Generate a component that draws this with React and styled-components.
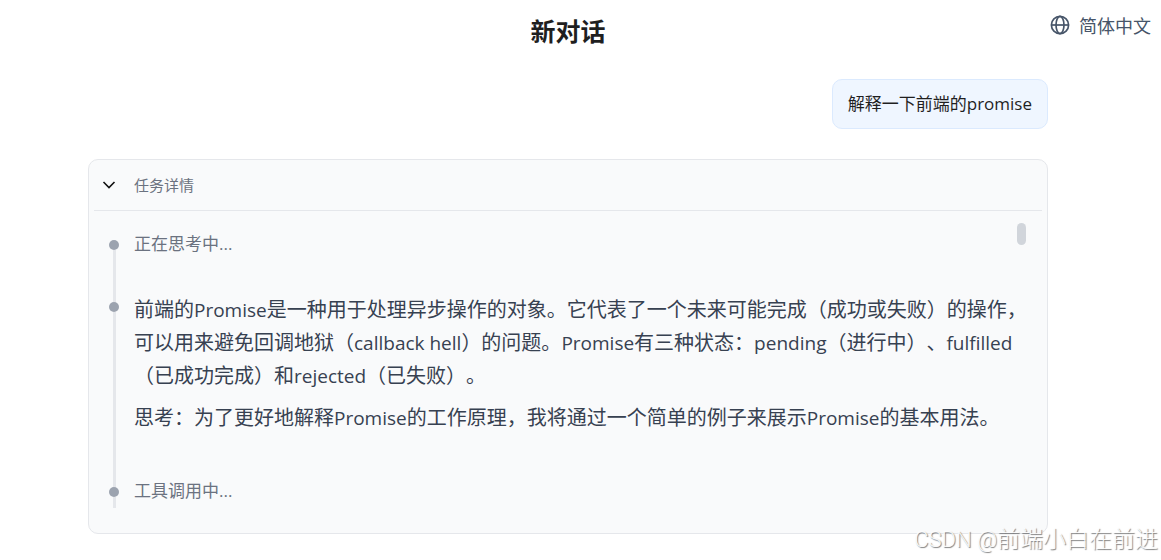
import React from "react";
import styled, { createGlobalStyle } from "styled-components";

const GlobalStyle = createGlobalStyle`
  *, *::before, *::after { box-sizing: border-box; }
  body {
    margin: 0;
    background: #fff;
    color: #1f1f1f;
    font-family: "Open Sans", "Noto Sans CJK SC", sans-serif;
    text-spacing-trim: space-all;
  }
  h1, h2, p, ol { margin: 0; padding: 0; }
  button { font: inherit; color: inherit; background: none; border: 0; padding: 0; cursor: pointer; }
`;

const Page = styled.div`
  position: relative;
  min-height: 100vh;
  overflow: hidden;
`;

const Header = styled.header`
  display: flex;
  align-items: flex-start;
  padding: 12px 10px 0 86px;
`;

const Title = styled.h1`
  flex: 1;
  text-align: center;
  font-size: 25px;
  line-height: 38px;
  font-weight: 700;
`;

const LanguageButton = styled.button`
  display: flex;
  align-items: flex-start;
  gap: 9px;
  font-size: 18px;
  line-height: 28px;
  color: #475569;

  svg { margin-top: 3px; }
`;

const Conversation = styled.main`
  max-width: 1136px;
  margin-right: 25px;
  padding: 29px 88px 26px;
  display: flex;
  flex-direction: column;
  gap: 30px;
`;

const UserMessage = styled.p`
  align-self: flex-end;
  padding: 11px 15px;
  border: 1px solid #dbeafe;
  border-radius: 10px;
  background: #eff6ff;
  font-size: 17px;
  line-height: 26px;
`;

const Latin = styled.span`
  font-size: ${({ $size }) => $size}px;
  line-height: 1;
`;

const TaskCard = styled.section`
  padding: 0 5px 5px;
  border: 1px solid #e5e7eb;
  border-radius: 10px;
  background: #f9fafb;
`;

const TaskHeading = styled.h2`
  border-bottom: 1px solid #e5e7eb;
  font-size: 15px;
  font-weight: 400;
`;

const TaskToggle = styled.button`
  display: flex;
  align-items: center;
  gap: 17px;
  width: 100%;
  padding: 14px 7px;
  line-height: 22px;
  color: #6b7280;
  text-align: left;

  svg { color: #111; }
`;

const TaskBody = styled.div`
  display: flex;
  align-items: flex-start;
  padding: 12px 16px 20px 15px;
`;

const Timeline = styled.ol`
  flex: 1;
  min-width: 0;
  margin-right: -12px;
  list-style: none;
`;

const Step = styled.li`
  display: flex;
  gap: 15px;
  color: #6b7280;
  font-size: 17px;
  line-height: 26px;
`;

const RailTrack = styled.div`
  flex: none;
  width: 10px;
  display: flex;
  flex-direction: column;
  align-items: center;

  &::before {
    content: "";
    width: 3px;
    height: ${({ $lead }) => $lead}px;
    background: ${({ $first }) => ($first ? "transparent" : "#e5e7eb")};
  }
  &::after {
    content: "";
    flex: 1;
    width: 3px;
    background: #e5e7eb;
  }
`;

const Dot = styled.span`
  width: 10px;
  height: 10px;
  border-radius: 50%;
  background: #9ca3af;
`;

const Rail = ({ lead, first }) => (
  <RailTrack $lead={lead} $first={first} aria-hidden="true">
    <Dot />
  </RailTrack>
);

const StepContent = styled.div`
  flex: 1;
  min-width: 0;
  padding: ${({ $pad }) => $pad};
`;

const Paragraph = styled.p`
  font-size: 20px;
  line-height: 33px;
  color: #374151;

  & + & { margin-top: 9px; }
`;

const ScrollThumb = styled.div`
  flex: none;
  width: 9px;
  height: 22px;
  border-radius: 5px;
  background: #d1d5db;
`;

const Watermark = styled.div`
  position: absolute;
  right: 3px;
  bottom: 4px;
  font-family: Roboto, "Noto Sans CJK SC", sans-serif;
  font-size: 23px;
  line-height: 32px;
  font-weight: 300;
  color: rgba(255, 255, 255, 0.9);
  text-shadow: 1px 1px 1px rgba(0, 0, 0, 0.5);
  pointer-events: none;
`;

const GlobeIcon = () => (
  <svg width="20" height="20" viewBox="0 0 20 20" fill="none" stroke="currentColor" strokeWidth="1.7" aria-hidden="true">
    <circle cx="10" cy="10" r="8.6" />
    <ellipse cx="10" cy="10" rx="4" ry="8.6" />
    <path d="M1.4 10h17.2" />
  </svg>
);

const ChevronIcon = () => (
  <svg width="16" height="16" viewBox="0 0 16 16" fill="none" stroke="currentColor" strokeWidth="1.6" aria-hidden="true">
    <path d="M2.5 5 8 10.5 13.5 5" />
  </svg>
);

export default function App() {
  return (
    <Page lang="zh-CN">
      <GlobalStyle />
      <Header>
        <Title>新对话</Title>
        <LanguageButton type="button">
          <GlobeIcon />
          简体中文
        </LanguageButton>
      </Header>
      <Conversation>
        <UserMessage>解释一下前端的promise</UserMessage>
        <TaskCard>
          <TaskHeading>
            <TaskToggle type="button" aria-expanded="true">
              <ChevronIcon />
              任务详情
            </TaskToggle>
          </TaskHeading>
          <TaskBody>
            <Timeline>
              <Step>
                <Rail first lead={17} />
                <StepContent $pad="8px 0 31px">正在思考中...</StepContent>
              </Step>
              <Step>
                <Rail lead={14} />
                <StepContent $pad="5px 0 39px">
                  <Paragraph>
                    前端的<Latin $size={19}>Promise</Latin>是一种用于处理异步操作的对象。它代表了一个未来可能完成（成功或失败）的操作，可以用来避免回调地狱（
                    <Latin $size={19}>callback hell</Latin>）的问题。<Latin $size={19}>Promise</Latin>有三种状态：
                    <Latin $size={19}>pending</Latin>（进行中）、<Latin $size={19}>fulfilled</Latin>（已成功完成）和
                    <Latin $size={19}>rejected</Latin>（已失败）。
                  </Paragraph>
                  <Paragraph>
                    思考：为了更好地解释<Latin $size={19}>Promise</Latin>的工作原理，我将通过一个简单的例子来展示
                    <Latin $size={19}>Promise</Latin>的基本用法。
                  </Paragraph>
                </StepContent>
              </Step>
              <Step>
                <Rail lead={14} />
                <StepContent $pad="5px 0 4px">工具调用中...</StepContent>
              </Step>
            </Timeline>
            <ScrollThumb />
          </TaskBody>
        </TaskCard>
      </Conversation>
      <Watermark>
        <Latin $size={22}>CSDN @</Latin>前端小白在前进
      </Watermark>
    </Page>
  );
}
